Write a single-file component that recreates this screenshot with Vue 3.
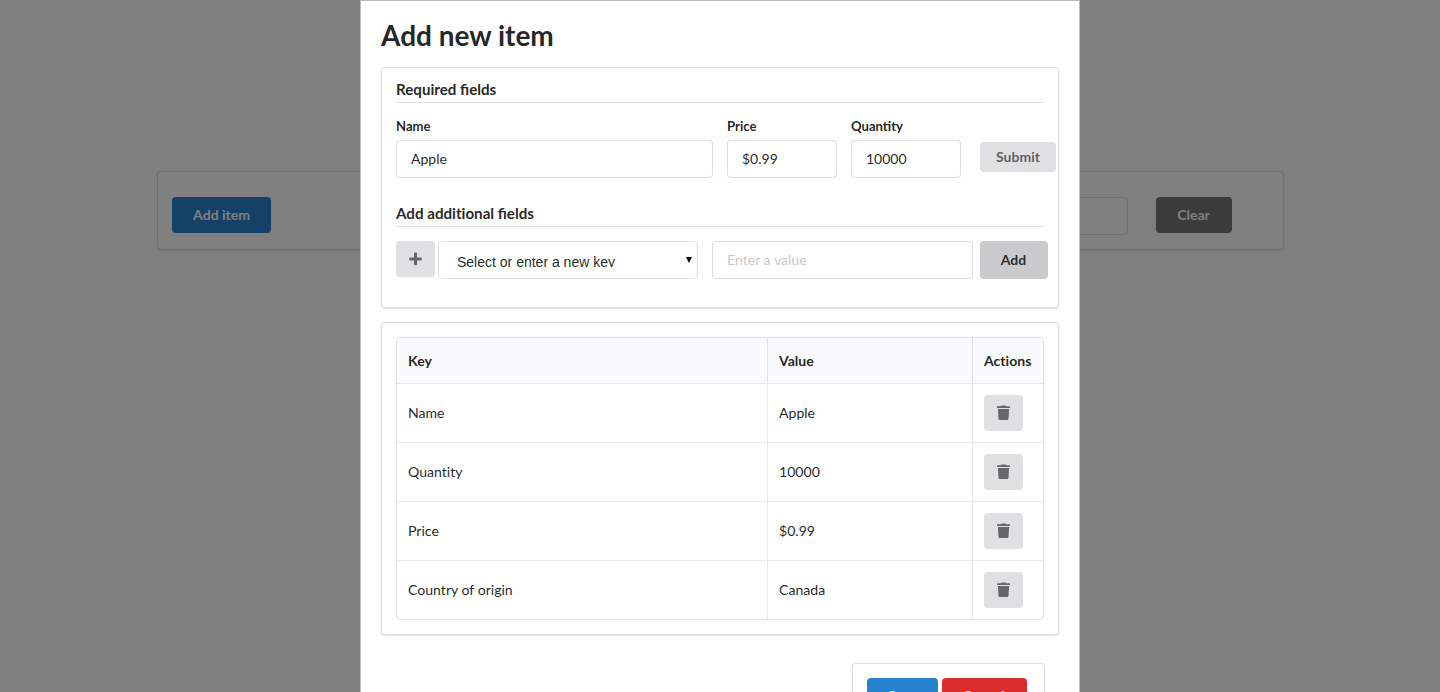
<script setup>
const rows = [
  ['Name', 'Apple'],
  ['Quantity', '10000'],
  ['Price', '$0.99'],
  ['Country of origin', 'Canada'],
]
</script>

<template>
  <div class="page">
    <div class="segment toolbar">
      <button class="btn primary">Add item</button>
      <div class="toolbar-right">
        <div class="input search"></div>
        <button class="btn dark">Clear</button>
      </div>
    </div>

    <div class="overlay">
      <div class="modal">
        <h1>Add new item</h1>

        <div class="segment form">
          <h4>Required <span class="lig">fields</span></h4>
          <div class="required-row">
            <label class="field name">Name<span class="input">Apple</span></label>
            <label class="field small">Price<span class="input">$0.99</span></label>
            <label class="field small">Quantity<span class="input">10000</span></label>
            <button class="btn submit">Submit</button>
          </div>

          <h4 class="second">Add additional <span class="lig">fields</span></h4>
          <div class="extra-row">
            <button class="btn icon">
              <svg width="13" height="14" viewBox="0 0 13 14"><path d="M5 1.4Q5 .6 5.8.6H7.2Q8 .6 8 1.4V5.4H12Q12.8 5.4 12.8 6.2V7.6Q12.8 8.4 12 8.4H8V12.4Q8 13.2 7.2 13.2H5.8Q5 13.2 5 12.4V8.4H1Q.2 8.4.2 7.6V6.2Q.2 5.4 1 5.4H5Z" /></svg>
            </button>
            <div class="input select">
              <span class="select-text">Select or enter a new key</span>
              <svg class="arrow" width="6" height="6" viewBox="0 0 6 6"><path d="M0 0H6L3 6Z" /></svg>
            </div>
            <div class="input value">Enter a value</div>
            <button class="btn add">Add</button>
          </div>
        </div>

        <div class="segment listing">
          <div class="table">
            <div class="row head"><div>Key</div><div>Value</div><div>Actions</div></div>
            <div v-for="row in rows" :key="row[0]" class="row">
              <div>{{ row[0] }}</div>
              <div>{{ row[1] }}</div>
              <div>
                <button class="btn icon">
                  <svg width="13" height="16" viewBox="0 0 13 16"><path d="M.4 1.2H4L4.4.5H8.6L9 1.2H12.6Q13 1.2 13 1.6V2.6Q13 3 12.6 3H.4Q0 3 0 2.6V1.6Q0 1.2.4 1.2ZM.9 4H12.1L11.5 13.8Q11.4 15 10.2 15H2.8Q1.6 15 1.5 13.8Z" /></svg>
                </button>
              </div>
            </div>
          </div>
        </div>

        <div class="segment actions">
          <button class="btn primary save">Save</button>
          <button class="btn danger">Cancel</button>
        </div>
      </div>
    </div>
  </div>
</template>

<style>
body { overflow: hidden; }
</style>

<style scoped>
* { box-sizing: border-box; }
.page {
  height: 692px;
  overflow: hidden;
  padding-top: 171px;
  background: #fff;
  color: rgba(0, 0, 0, 0.87);
  font: 14px/20px Lato, sans-serif;
}
.page, .page * { font-variant-ligatures: none; }
.page .lig { font-variant-ligatures: common-ligatures; }
.segment {
  border: 1px solid rgba(34, 36, 38, 0.15);
  border-radius: 4px;
  background: #fff;
  box-shadow: 0 1px 2px rgba(34, 36, 38, 0.15);
}
.toolbar {
  display: flex;
  justify-content: space-between;
  align-items: flex-start;
  width: 1127px;
  height: 79px;
  margin-left: 157px;
  padding: 25px 51px 0 14px;
}
.toolbar-right { display: flex; gap: 28px; }
.btn {
  display: block;
  flex: none;
  height: 36px;
  padding: 0 21px;
  border: 0;
  border-radius: 4px;
  background: #dfe0e2;
  color: rgba(0, 0, 0, 0.6);
  font: 700 14px/14px Lato, sans-serif;
}
.btn.primary { width: 99px; padding: 0; background: #2782cf; color: #fff; }
.btn.dark { width: 76px; padding: 0 1px 0 0; background: #767676; color: #fff; }
.btn.danger { width: 85px; padding: 0 2px 0 0; background: #db2e2c; color: #fff; }
.input {
  display: block;
  flex: none;
  height: 38px;
  padding: 8px 14px;
  border: 1px solid rgba(34, 36, 38, 0.15);
  border-radius: 4px;
  background: #fff;
  font: 400 14px/20px Lato, sans-serif;
}
.search { width: 200px; }
.overlay {
  position: fixed;
  inset: 0;
  display: flex;
  justify-content: center;
  background: rgba(0, 0, 0, 0.5);
}
.modal {
  width: 720px;
  height: 760px;
  padding: 18px 20px;
  border: 1px solid #bbb;
  background: #fff;
}
h1 { margin: 0; height: 48px; font: 700 28px/32px Lato, sans-serif; }
h4 {
  margin: 0;
  height: 23px;
  border-bottom: 1px solid rgba(34, 36, 38, 0.15);
  font: 700 15.15px/19px Lato, sans-serif;
}
.form { height: 241px; padding: 12px 14px 0; }
.required-row { display: flex; gap: 14px; margin-top: 14px; }
.field { flex: none; font: 700 13.1px/19px Lato, sans-serif; }
.field .input { margin-top: 4px; }
.name { width: 317px; }
.small { width: 110px; }
.submit { width: 76px; height: 30px; margin: 25px 0 0 5px; padding: 0; }
.second { margin-top: 26px; }
.extra-row { display: flex; margin-top: 14px; }
.icon {
  display: flex;
  justify-content: center;
  align-items: center;
  width: 39px;
  padding: 0;
}
.icon svg { fill: #666; }
.select {
  display: flex;
  justify-content: space-between;
  width: 260px;
  margin-left: 3px;
  padding: 11px 5px 0 18px;
}
.select-text {
  height: 14px;
  overflow: hidden;
  font: 14px/18px "Liberation Sans", Arial, sans-serif;
}
.arrow { margin-top: 4px; }
.value { width: 261px; margin-left: 14px; color: rgba(191, 191, 191, 0.87); font-size: 14.1px; }
.add { width: 68px; height: 38px; margin-left: 7px; padding: 0 1px 0 0; background: #c9cacc; color: rgba(0, 0, 0, 0.8); }
.listing { height: 313px; margin-top: 14px; padding: 14px; }
.table {
  border: 1px solid rgba(34, 36, 38, 0.15);
  border-radius: 4px;
  overflow: hidden;
  font-size: 14.08px;
}
.row {
  display: grid;
  grid-template-columns: 370px 205px 1fr;
  height: 59px;
  border-top: 1px solid rgba(34, 36, 38, 0.1);
}
.row > div { display: flex; align-items: center; padding: 0 11px; }
.row > div + div { border-left: 1px solid rgba(34, 36, 38, 0.1); }
.row.head { height: 45px; border-top: 0; background: #f9fafb; font-weight: 700; }
.actions {
  display: flex;
  gap: 4px;
  width: 193px;
  height: 66px;
  margin: 28px 14px 0 auto;
  padding: 14px;
}
.btn.save { width: 71px; padding: 0; }
</style>
